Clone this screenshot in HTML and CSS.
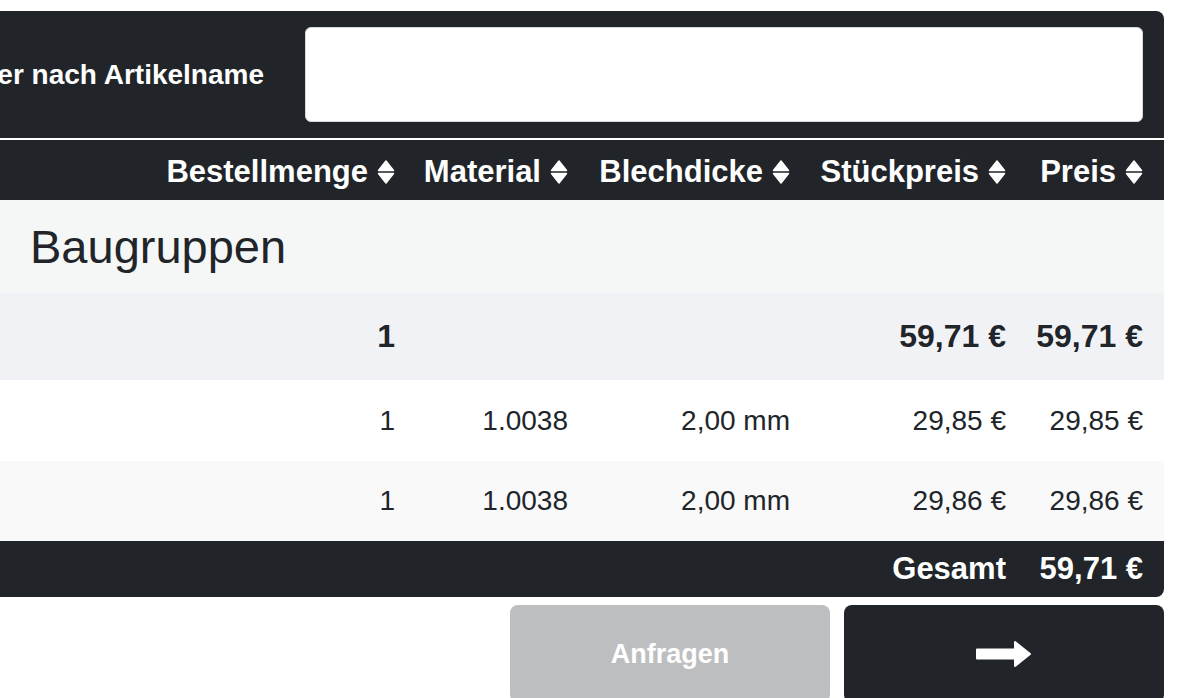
FILE: index.html
```html
<!DOCTYPE html>
<html lang="de">
<head>
  <meta charset="UTF-8" />
  <title>Warenkorb</title>
  <meta name="viewport" content="width=device-width, initial-scale=1.0" />
  <link rel="stylesheet" href="styles.css">
</head>
<body>
  <div class="wrap">
    <div class="panel">
      <div class="filter">
        <label for="filterName">Filter nach Artikelname</label>
        <input type="text" id="filterName" />
      </div>

      <table class="cart">
        <colgroup>
          <col class="c-name" />
          <col class="c-qty" />
          <col class="c-mat" />
          <col class="c-thick" />
          <col class="c-unit" />
          <col class="c-price" />
        </colgroup>
        <thead>
          <tr>
            <th></th>
            <th>Bestellmenge<svg class="sort" viewBox="0 0 18 26"><path d="M1.5 11.5 L16.5 11.5 L9 2 Z M1.5 14.5 L16.5 14.5 L9 24 Z" /></svg></th>
            <th>Material<svg class="sort" viewBox="0 0 18 26"><path d="M1.5 11.5 L16.5 11.5 L9 2 Z M1.5 14.5 L16.5 14.5 L9 24 Z" /></svg></th>
            <th>Blechdicke<svg class="sort" viewBox="0 0 18 26"><path d="M1.5 11.5 L16.5 11.5 L9 2 Z M1.5 14.5 L16.5 14.5 L9 24 Z" /></svg></th>
            <th>Stückpreis<svg class="sort" viewBox="0 0 18 26"><path d="M1.5 11.5 L16.5 11.5 L9 2 Z M1.5 14.5 L16.5 14.5 L9 24 Z" /></svg></th>
            <th>Preis<svg class="sort" viewBox="0 0 18 26"><path d="M1.5 11.5 L16.5 11.5 L9 2 Z M1.5 14.5 L16.5 14.5 L9 24 Z" /></svg></th>
          </tr>
        </thead>
        <tbody>
          <tr class="section-row">
            <td colspan="6">Baugruppen</td>
          </tr>
          <tr class="group-row">
            <td></td>
            <td>1</td>
            <td></td>
            <td></td>
            <td>59,71 €</td>
            <td>59,71 €</td>
          </tr>
          <tr class="item-row">
            <td></td>
            <td>1</td>
            <td>1.0038</td>
            <td>2,00 mm</td>
            <td>29,85 €</td>
            <td>29,85 €</td>
          </tr>
          <tr class="item-row striped">
            <td></td>
            <td>1</td>
            <td>1.0038</td>
            <td>2,00 mm</td>
            <td>29,86 €</td>
            <td>29,86 €</td>
          </tr>
        </tbody>
        <tfoot>
          <tr>
            <td colspan="5">Gesamt</td>
            <td>59,71 €</td>
          </tr>
        </tfoot>
      </table>

      <div class="actions">
        <button class="btn-request" disabled>Anfragen</button>
        <button class="btn-next">
          <svg viewBox="0 0 58 28" width="58" height="28"><path d="M2 9.5 H40 V2 L55 14 L40 26 V18.5 H2 Z" /></svg>
        </button>
      </div>
    </div>
  </div>
</body>
</html>
```

FILE: styles.css
```css
body {
  margin: 0;
  font-family: "Liberation Sans", Arial, sans-serif;
  background: #fff;
  color: #212529;
  overflow: hidden;
}
.wrap {
  display: flex;
  justify-content: flex-end;
  padding: 11px 28px 0 0;
}
.panel {
  width: 1182px;
  flex-shrink: 0;
}
.filter {
  display: flex;
  justify-content: flex-end;
  align-items: center;
  gap: 41px;
  background: #212529;
  padding: 16px 21px;
  border-top-right-radius: 8px;
  margin-bottom: 2px;
}
.filter label {
  flex-shrink: 0;
  color: #fff;
  font-weight: 700;
  font-size: 28px;
  white-space: nowrap;
}
.filter input {
  flex-shrink: 0;
  width: 838px;
  height: 95px;
  box-sizing: border-box;
  border: 1px solid #d3d7dc;
  border-radius: 6px;
  background: #fff;
}
.cart {
  width: 100%;
  table-layout: fixed;
  border-collapse: collapse;
}
.c-qty { width: 261px; }
.c-mat { width: 173px; }
.c-thick { width: 222px; }
.c-unit { width: 216px; }
.c-price { width: 146px; }
.cart th, .cart td {
  text-align: right;
  padding: 0 12px 0 13px;
  white-space: nowrap;
}
.cart th:last-child, .cart td:last-child {
  padding-right: 21px;
}
.cart thead tr {
  background: #212529;
  height: 60px;
}
.cart th {
  color: #fff;
  font-size: 31px;
  font-weight: 700;
  padding-top: 3px;
}
.sort {
  width: 18px;
  height: 26px;
  margin-left: 9px;
  vertical-align: -3px;
  fill: #fff;
  stroke: #fff;
  stroke-width: 1.5;
  stroke-linejoin: round;
}
.section-row {
  background: #f5f7f7;
  height: 93px;
}
.section-row td {
  text-align: left;
  padding-left: 48px;
  font-size: 47px;
}
.group-row {
  background: #f1f2f6;
  height: 87px;
}
.group-row td {
  font-size: 32px;
  font-weight: 700;
}
.item-row {
  background: #fff;
  height: 81px;
  font-size: 28px;
}
.item-row.striped {
  background: #f9f9f9;
  height: 80px;
}
.cart tfoot tr {
  background: #212529;
  height: 56px;
}
.cart tfoot td {
  color: #fff;
  font-size: 31px;
  font-weight: 700;
}
.cart tfoot td:last-child {
  border-bottom-right-radius: 8px;
}
.actions {
  display: flex;
  justify-content: flex-end;
  gap: 14px;
  margin-top: 8px;
}
.actions button {
  width: 320px;
  height: 98px;
  border: none;
  border-radius: 8px;
  font-family: inherit;
}
.btn-request {
  background: #bdbec0;
  color: #fff;
  font-size: 27px;
  font-weight: 700;
}
.btn-next {
  background: #212529;
  display: flex;
  align-items: center;
  justify-content: center;
}
.btn-next svg {
  fill: #fff;
  stroke: #fff;
  stroke-width: 2;
  stroke-linejoin: round;
}
```
